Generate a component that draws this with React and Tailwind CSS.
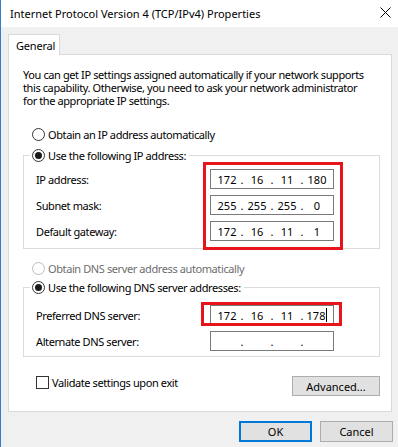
import React from 'react';

const font = { fontFamily: '"Noto Sans", "Open Sans", sans-serif' };

function Radio({ checked, disabled }) {
  return (
    <span
      className={`w-[13px] h-[13px] rounded-full border bg-white flex items-center justify-center shrink-0 ${
        disabled ? 'border-[#bcbcbc]' : 'border-[#333333]'
      }`}
    >
      {checked && <span className="w-[7px] h-[7px] rounded-full bg-[#1a1a1a]" />}
    </span>
  );
}

function IpBox({ parts, caret }) {
  return (
    <div className="w-[124px] h-[20px] border border-[#7a7a7a] bg-white flex items-center pl-[3px] text-black tracking-normal">
      {parts.map((p, i) => (
        <React.Fragment key={i}>
          {i > 0 && <span className="w-[4px] text-center">.</span>}
          <span className="w-[26px] flex justify-center items-center">
            {p}
            {caret && i === 3 && <span className="w-px h-[14px] bg-black ml-px" />}
          </span>
        </React.Fragment>
      ))}
    </div>
  );
}

export default function App() {
  return (
    <div
      className="w-[398px] h-[447px] bg-[#f0f0f0] flex flex-col border-l border-[#2f7fcf] text-[11px] text-black leading-[13px]"
      style={font}
    >
      {/* title bar */}
      <div className="h-[27px] bg-white flex items-center justify-between pl-[9px] pr-[7px] shrink-0">
        <span className="text-[11px]">Internet Protocol Version 4 (TCP/IPv4) Properties</span>
        <svg width="11" height="11" viewBox="0 0 11 11" className="mt-[-2px]">
          <path d="M0.5 0.5 L10.5 10.5 M10.5 0.5 L0.5 10.5" stroke="#000" strokeWidth="1" />
        </svg>
      </div>

      <div className="pt-[7px] pl-[7px] pr-[6px]">
        {/* tab */}
        <div className="flex">
          <div className="w-[52px] h-[21px] bg-white border border-b-0 border-[#d9d9d9] flex items-center pl-[7px] -mb-px relative z-10 tracking-[-0.2px]">
            General
          </div>
        </div>

        {/* panel */}
        <div className="relative h-[358px] bg-white border border-[#d9d9d9] pl-[14px] pr-[11px] tracking-[-0.4px]">
          <p className="mt-[13px] whitespace-nowrap">
            You can get IP settings assigned automatically if your network supports
            <br />
            this capability. Otherwise, you need to ask your network administrator
            <br />
            for the appropriate IP settings.
          </p>

          <div className="mt-[21px] ml-[9px] h-[13px] flex items-center gap-[3px]">
            <Radio />
            <span>Obtain an IP address automatically</span>
          </div>

          <fieldset className="mt-[8px] border border-[#dcdcdc] pl-[12px] pb-[7px]">
            <legend className="ml-[-6px] px-[2px] pr-[3px]">
              <span className="flex items-center gap-[3px] h-[13px]">
                <Radio checked />
                <span>Use the following IP address:</span>
              </span>
            </legend>
            <div className="mt-[7px] flex flex-col gap-[6px]">
              {[
                ['IP address:', ['172', '16', '11', '180']],
                ['Subnet mask:', ['255', '255', '255', '0']],
                ['Default gateway:', ['172', '16', '11', '1']],
              ].map(([label, parts]) => (
                <div key={label} className="flex items-center h-[20px]">
                  <span className="w-[174px]">{label}</span>
                  <IpBox parts={parts} />
                </div>
              ))}
            </div>
          </fieldset>

          <div className="mt-[13px] ml-[9px] h-[13px] flex items-center gap-[3px] text-[#6d6d6d]">
            <Radio disabled />
            <span>Obtain DNS server address automatically</span>
          </div>

          <fieldset className="mt-[6px] border border-[#dcdcdc] pl-[12px] pb-[5px]">
            <legend className="ml-[-6px] px-[2px] pr-[3px]">
              <span className="flex items-center gap-[3px] h-[13px]">
                <Radio checked />
                <span>Use the following DNS server addresses:</span>
              </span>
            </legend>
            <div className="mt-[11px] flex flex-col gap-[6px]">
              <div className="flex items-center h-[20px]">
                <span className="w-[174px]">Preferred DNS server:</span>
                <IpBox parts={['172', '16', '11', '178']} caret />
              </div>
              <div className="flex items-center h-[20px]">
                <span className="w-[174px]">Alternate DNS server:</span>
                <IpBox parts={['', '', '', '']} />
              </div>
            </div>
          </fieldset>

          <div className="mt-[19px] flex items-start justify-between w-[357px]">
            <div className="ml-[13px] flex items-center gap-[3px] h-[13px]">
              <span className="w-[13px] h-[13px] border border-[#333333] bg-white" />
              <span>Validate settings upon exit</span>
            </div>
            <button className="w-[88px] h-[20px] bg-[#e1e1e1] border border-[#adadad] text-[11px] tracking-normal">
              Advanced...
            </button>
          </div>

          {/* annotation boxes */}
          <div className="absolute left-[194px] top-[107px] w-[140px] h-[88px] border-[3px] border-[#e8141c]" />
          <div className="absolute left-[192px] top-[247px] w-[141px] h-[24px] border-[3px] border-[#e8141c]" />
        </div>

        {/* dialog buttons */}
        <div className="mt-[9px] flex justify-end gap-[8px]">
          <button className="w-[73px] h-[21px] bg-[#e1e1e1] border-2 border-[#0078d7] text-[11px]">OK</button>
          <button className="w-[73px] h-[21px] bg-[#e1e1e1] border border-[#adadad] text-[11px] mr-[-1px]">
            Cancel
          </button>
        </div>
      </div>
    </div>
  );
}
